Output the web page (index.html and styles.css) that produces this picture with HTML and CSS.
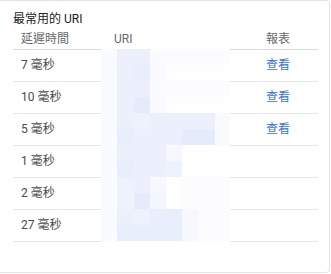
FILE: index.html
```html
<!DOCTYPE html>
<html lang="zh-Hant">
<head>
<meta charset="utf-8">
<link rel="stylesheet" href="styles.css">
</head>
<body>
<div class="card">
  <div class="title">最常用的 URI</div>
  <div class="table">
    <div class="row head">
      <div class="c1">延遲時間</div>
      <div class="c2">URI</div>
      <div class="c3">報表</div>
    </div>
    <div class="row"><div class="c1">7 毫秒</div><div class="c2"></div><div class="c3"><a class="link">查看</a></div></div>
    <div class="row"><div class="c1">10 毫秒</div><div class="c2"></div><div class="c3"><a class="link">查看</a></div></div>
    <div class="row"><div class="c1">5 毫秒</div><div class="c2"></div><div class="c3"><a class="link">查看</a></div></div>
    <div class="row"><div class="c1">1 毫秒</div><div class="c2"></div><div class="c3"></div></div>
    <div class="row"><div class="c1">2 毫秒</div><div class="c2"></div><div class="c3"></div></div>
    <div class="row"><div class="c1">27 毫秒</div><div class="c2"></div><div class="c3"></div></div>
    <div class="blur">
      <i class="b0"></i><i class="b2"></i><i class="b2"></i><i class="b0"></i><i class="b1"></i><i class="b1"></i><i class="b1"></i><i class="b1"></i>
      <i class="b0"></i><i class="b2"></i><i class="b3"></i><i class="b0"></i><i class="bw"></i><i class="bw"></i><i class="bw"></i><i class="bw"></i>
      <i class="b0"></i><i class="b2"></i><i class="b2"></i><i class="b0"></i><i class="b1"></i><i class="b1"></i><i class="b1"></i><i class="b1"></i>
      <i class="b0"></i><i class="b2"></i><i class="b4"></i><i class="b0"></i><i class="bw"></i><i class="bw"></i><i class="bw"></i><i class="bw"></i>
      <i class="b0"></i><i class="b2"></i><i class="b5"></i><i class="b2"></i><i class="b2"></i><i class="b2"></i><i class="b2"></i><i class="b6"></i>
      <i class="b0"></i><i class="b3"></i><i class="b2"></i><i class="b2"></i><i class="b2"></i><i class="b4"></i><i class="b4"></i><i class="b6"></i>
      <i class="b0"></i><i class="b2"></i><i class="b2"></i><i class="b2"></i><i class="b7"></i><i class="bw"></i><i class="bw"></i><i class="bw"></i>
      <i class="b0"></i><i class="b3"></i><i class="b2"></i><i class="b2"></i><i class="b5"></i><i class="bw"></i><i class="bw"></i><i class="bw"></i>
      <i class="b0"></i><i class="b5"></i><i class="b2"></i><i class="b7"></i><i class="bw"></i><i class="b1"></i><i class="b1"></i><i class="b1"></i>
      <i class="b0"></i><i class="b5"></i><i class="b4"></i><i class="b8"></i><i class="bw"></i><i class="b1"></i><i class="b1"></i><i class="b1"></i>
      <i class="b0"></i><i class="b2"></i><i class="b5"></i><i class="b3"></i><i class="b3"></i><i class="b7"></i><i class="b1"></i><i class="b1"></i>
      <i class="b0"></i><i class="b3"></i><i class="b3"></i><i class="b3"></i><i class="b3"></i><i class="b7"></i><i class="b1"></i><i class="b1"></i>
    </div>
  </div>
</div>
</body>
</html>
```

FILE: styles.css
```css
* { box-sizing: border-box; }
html, body { margin: 0; padding: 0; background: #ffffff; }
body {
  width: 331px;
  height: 274px;
  overflow: hidden;
  font-family: Roboto, "Noto Sans CJK TC", "Noto Sans", sans-serif;
  font-size: 12px;
}
.card {
  margin-left: -4px;
  width: 334px;
  height: 273px;
  border: 1px solid #e3e3e3;
  border-radius: 4px;
  padding: 8px 0 0 16px;
  background: #fff;
}
.title {
  line-height: 20px;
  color: #202124;
  font-weight: 400;
}
.table {
  position: relative;
  width: 305px;
}
.row {
  display: grid;
  grid-template-columns: 93px 152px 1fr;
  padding-left: 8px;
  height: 32px;
  line-height: 31px;
  border-bottom: 1px solid #e6e6e6;
  color: #4a4a4a;
}
.row.head {
  height: 21px;
  line-height: 20px;
  border-bottom: 1px solid #d9d9d9;
  color: #666a6e;
}
.link {
  color: #3b73d9;
  cursor: pointer;
}
.blur {
  position: absolute;
  left: 88px;
  top: 20px;
  width: 129px;
  height: 193px;
  display: grid;
  grid-template-columns: repeat(7, 16.3px) 1fr;
  grid-template-rows: repeat(12, 16px);
  background: #fdfdff;
}
.blur i { display: block; }
.b0 { background: #fafbff; }
.b1 { background: #fcfcff; }
.bw { background: #fefeff; }
.b2 { background: #ebf0fc; }
.b3 { background: #e8eefb; }
.b4 { background: #e5ebfa; }
.b5 { background: #eef2fd; }
.b6 { background: #f9fafe; }
.b7 { background: #f6f8fe; }
.b8 { background: #f3f6fe; }
```
